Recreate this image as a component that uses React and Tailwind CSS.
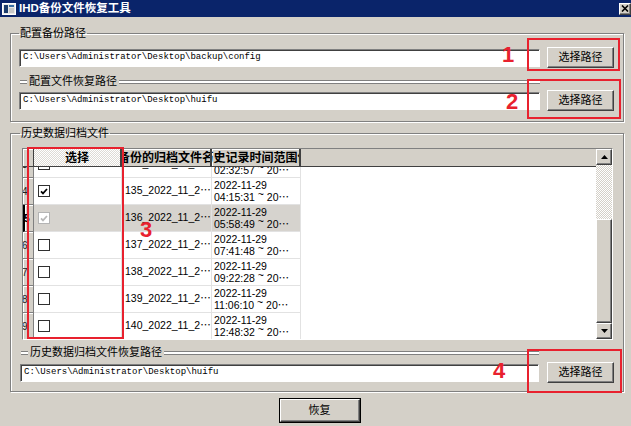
import React from "react";

const raised =
  "border border-t-white border-l-white border-r-[#404040] border-b-[#404040] shadow-[inset_-1px_-1px_0_#808080]";
const sunken =
  "border border-t-[#808080] border-l-[#808080] border-r-white border-b-white shadow-[inset_1px_1px_0_#404040]";

const rows = [
  { n: 3, file: "134_2022_11_2", t: "02:32:57", state: "off" },
  { n: 4, file: "135_2022_11_2", t: "04:15:31", state: "on" },
  { n: 5, file: "136_2022_11_2", t: "05:58:49", state: "sel" },
  { n: 6, file: "137_2022_11_2", t: "07:41:48", state: "off" },
  { n: 7, file: "138_2022_11_2", t: "09:22:28", state: "off" },
  { n: 8, file: "139_2022_11_2", t: "11:06:10", state: "off" },
  { n: 9, file: "140_2022_11_2", t: "12:48:32", state: "off" },
];

const Button = ({ children, className = "" }) => (
  <button
    type="button"
    className={`flex items-center justify-center bg-[#d4d0c8] text-[11px] leading-[13px] text-black ${raised} ${className}`}
  >
    {children}
  </button>
);

const TextBox = ({ value, className = "" }) => (
  <div
    className={`h-[18px] bg-white flex items-center pl-[3px] text-[9px] text-black [font-family:'Liberation_Mono',monospace] whitespace-nowrap overflow-hidden ${sunken} ${className}`}
  >
    {value}
  </div>
);

const Strip = ({ className = "" }) => (
  <div className={`h-[4px] border-y border-[#808080] bg-white ${className}`} />
);

// 分组内的小标题（带凹槽线）
const SubLabel = ({ text, className = "" }) => (
  <div className={`flex items-center h-[13px] ${className}`}>
    <Strip className="w-[7px] ml-[1px]" />
    <span className="px-[2px] text-[11px] leading-[13px]">{text}</span>
    <Strip className="flex-1" />
  </div>
);

const Check = ({ checked, dim }) => (
  <span
    className={`w-[12px] h-[12px] flex items-center justify-center bg-white border ${
      dim ? "border-[#b4b4b4]" : "border-[#303030]"
    }`}
  >
    {checked && (
      <svg width="8" height="7" viewBox="0 0 8 7">
        <path
          d="M1 3.3 L3 5.4 L7 1"
          fill="none"
          stroke={dim ? "#b8b8b8" : "#000"}
          strokeWidth="1.7"
        />
      </svg>
    )}
  </span>
);

const Row = ({ r }) => {
  const sel = r.state === "sel";
  const bg = sel ? "bg-[#d6d3ce]" : "bg-white";
  return (
    <div className="flex h-[27px]">
      <div
        className={`w-[11px] shrink-0 flex items-center overflow-hidden bg-[#d4d0c8] border-r border-b border-[#808080] shadow-[inset_1px_1px_0_#fff] text-[10px] ${
          sel ? "font-bold border-l-2 border-l-black" : "text-[#202020]"
        }`}
      >
        <span className="-ml-[1px]">{r.n}</span>
      </div>
      <div className={`w-[88px] shrink-0 flex items-center pl-[4px] border-r border-b border-[#e2e2e2] ${bg}`}>
        <Check checked={r.state !== "off"} dim={sel} />
      </div>
      <div
        className={`w-[90px] shrink-0 flex items-center pl-[3px] border-r border-b border-[#e2e2e2] text-[10.5px] whitespace-nowrap overflow-hidden ${bg}`}
      >
        {r.file}
        <span>⋯</span>
      </div>
      <div
        className={`w-[89px] shrink-0 flex flex-col justify-center pl-[2px] border-r border-b border-[#e2e2e2] text-[10.5px] leading-[12px] whitespace-nowrap overflow-hidden ${bg}`}
      >
        <span>2022-11-29</span>
        <span>
          {r.t} <span className="relative -top-[3px]">~</span> 20⋯
        </span>
      </div>
    </div>
  );
};

const Arrow = ({ down }) => (
  <svg width="7" height="4" viewBox="0 0 7 4">
    <path d={down ? "M0 0 H7 L3.5 4 Z" : "M0 4 H7 L3.5 0 Z"} fill="#000" />
  </svg>
);

const Table = () => (
  <div className={`mt-[8px] ml-[2px] mr-[1px] h-[192px] flex ${sunken}`}>
    <div className="flex-1 flex flex-col overflow-hidden">
      {/* 表头 */}
      <div className="h-[18px] shrink-0 flex bg-[#d4d0c8] border-b border-[#404040] font-bold text-[12px] leading-[14px]">
        <div className="w-[11px] shrink-0 border-r border-[#404040] shadow-[inset_1px_1px_0_#fff]" />
        <div className="w-[88px] shrink-0 flex items-center justify-center bg-[image:repeating-conic-gradient(#fff_0_25%,#dedbd5_0_50%)] bg-[length:2px_2px] border-r-2 border-[#404040]">
          选择
        </div>
        <div className="w-[90px] shrink-0 flex items-center justify-center overflow-hidden whitespace-nowrap border-r-2 border-[#404040] shadow-[inset_1px_1px_0_#fff]">
          备份的归档文件名
        </div>
        <div className="w-[89px] shrink-0 flex items-center justify-center overflow-hidden whitespace-nowrap border-r-2 border-[#404040] shadow-[inset_1px_1px_0_#fff]">
          历史记录时间范围值
        </div>
      </div>
      {/* 数据行 */}
      <div className="flex-1 bg-white overflow-hidden">
        <div className="-mt-[16px]">
          {rows.map((r) => (
            <Row key={r.n} r={r} />
          ))}
        </div>
      </div>
    </div>
    {/* 滚动条 */}
    <div className="w-[16px] shrink-0 flex flex-col bg-[#d4d0c8]">
      <div className={`h-[16px] shrink-0 flex items-center justify-center bg-[#d4d0c8] ${raised}`}>
        <Arrow />
      </div>
      <div className="h-[54px] shrink-0 bg-[image:repeating-conic-gradient(#fff_0_25%,#d4d0c8_0_50%)] bg-[length:2px_2px]" />
      <div className={`flex-1 bg-[#d4d0c8] ${raised}`} />
      <div className={`h-[16px] shrink-0 flex items-center justify-center bg-[#d4d0c8] ${raised}`}>
        <Arrow down />
      </div>
    </div>
  </div>
);

const Mark = ({ className = "", children }) => (
  <div
    className={`absolute text-[22px] leading-[22px] font-bold text-[#e8212e] [font-family:'Liberation_Sans',sans-serif] ${className}`}
  >
    {children}
  </div>
);

export default function App() {
  return (
    <div className="relative w-[631px] h-[426px] overflow-hidden bg-[#d4d0c8] text-black [font-family:'Liberation_Sans','Noto_Sans_CJK_SC',sans-serif]">
      {/* 标题栏 */}
      <div className="h-[17px] bg-[#0a246a] flex items-center pl-[2px]">
        <svg width="14" height="12" viewBox="0 0 14 12">
          <rect x="0.5" y="0.5" width="13" height="11" fill="#e8e8e8" stroke="#fff" />
          <rect x="2" y="2" width="4" height="8" fill="#1c3c6c" />
          <rect x="7" y="2" width="5" height="2" fill="#3a6ea5" />
          <rect x="7" y="5" width="5" height="5" fill="#c8c8c8" />
        </svg>
        <span className="ml-[3px] text-white font-bold text-[11.5px] leading-[13px]">IHD备份文件恢复工具</span>
        <div className={`ml-auto w-[12px] h-[12px] flex items-center justify-center bg-[#d4d0c8] ${raised}`}>
          <svg width="8" height="7" viewBox="0 0 8 7">
            <path d="M1 0.5 L7 6.5 M7 0.5 L1 6.5" stroke="#000" strokeWidth="1.6" />
          </svg>
        </div>
      </div>

      <div className="pl-[10px] pr-[7px]">
        {/* 配置备份路径 */}
        <fieldset className="mt-[10px] border border-[#808080] shadow-[inset_1px_1px_0_#fff,1px_1px_0_#fff] pl-[8px] pr-[9px] pb-[10px]">
          <legend className="px-[1px] text-[11px] leading-[13px]">配置备份路径</legend>
          <div className="mt-[7px] flex items-center gap-[7px]">
            <TextBox className="flex-1" value="C:\Users\Administrator\Desktop\backup\config" />
            <Button className="w-[67px] h-[21px]">选择路径</Button>
          </div>
          <SubLabel text="配置文件恢复路径" className="mt-[7px] mr-[74px]" />
          <div className="mt-[2px] flex items-center gap-[7px]">
            <TextBox className="flex-1" value="C:\Users\Administrator\Desktop\huifu" />
            <Button className="w-[67px] h-[21px]">选择路径</Button>
          </div>
        </fieldset>

        {/* 历史数据归档文件 */}
        <fieldset className="mt-[5px] border border-[#808080] shadow-[inset_1px_1px_0_#fff,1px_1px_0_#fff] pl-[9px] pr-[9px] pb-[8px]">
          <legend className="px-[1px] text-[11px] leading-[13px]">历史数据归档文件</legend>
          <Table />
          <SubLabel text="历史数据归档文件恢复路径" className="mt-[6px] mr-[75px]" />
          <div className="mt-[3px] flex items-center gap-[8px]">
            <TextBox className="flex-1" value="C:\Users\Administrator\Desktop\huifu" />
            <Button className="w-[67px] h-[21px]">选择路径</Button>
          </div>
        </fieldset>

        <div className="mt-[6px] flex justify-center pl-[5px]">
          <div className="border border-black">
            <Button className="w-[80px] h-[23px]">恢复</Button>
          </div>
        </div>
      </div>

      {/* 标注 */}
      <div className="absolute left-[527px] top-[38px] w-[93px] h-[33px] border-2 border-[#e8212e]" />
      <div className="absolute left-[527px] top-[79px] w-[94px] h-[40px] border-2 border-[#e8212e]" />
      <div className="absolute left-[27px] top-[147px] w-[97px] h-[192px] border-2 border-[#e8212e]" />
      <div className="absolute left-[527px] top-[349px] w-[95px] h-[44px] border-2 border-[#e8212e]" />
      <Mark className="left-[502px] top-[44px]">1</Mark>
      <Mark className="left-[506px] top-[91px]">2</Mark>
      <Mark className="left-[140px] top-[219px]">3</Mark>
      <Mark className="left-[493px] top-[360px]">4</Mark>
    </div>
  );
}
